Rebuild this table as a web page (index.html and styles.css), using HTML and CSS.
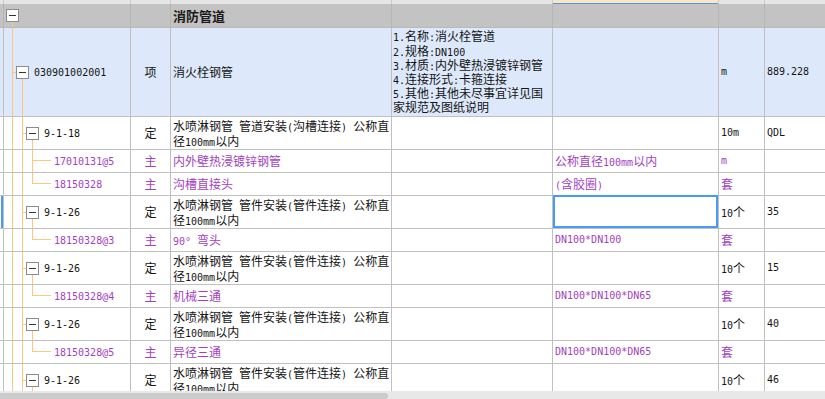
FILE: index.html
```html
<!DOCTYPE html>
<html lang="zh-CN">
<head>
<meta charset="utf-8">
<title>清单</title>
<link rel="stylesheet" href="styles.css">
</head>
<body>
<div class="grid">
  <div class="row hdr">
    <div class="cell c0"></div><div class="cell c1"></div><div class="cell c2"></div><div class="cell c3"></div><div class="cell c4"></div><div class="cell c5 colsel"></div><div class="cell c6"></div><div class="cell c7"></div>
  </div>
  <div class="row grp">
    <div class="cell c0"></div>
    <div class="cell c1"><span class="tg"></span></div>
    <div class="cell c2"></div>
    <div class="cell c3"><b class="gt">消防管道</b></div>
    <div class="cell c4"></div><div class="cell c5"></div><div class="cell c6"></div><div class="cell c7"></div>
  </div>
  <div class="row itm">
    <div class="cell c0"></div>
    <div class="cell c1"><span class="tg"></span><span class="code">030901002001</span></div>
    <div class="cell c2"><span class="t">项</span></div>
    <div class="cell c3"><span class="t">消火栓钢管</span></div>
    <div class="cell c4"><div class="desc"><span class="a">1.</span>名称<span class="a">:</span>消火栓管道<br><span class="a">2.</span>规格<span class="a">:DN100</span><br><span class="a">3.</span>材质<span class="a">:</span>内外壁热浸镀锌钢管<br><span class="a">4.</span>连接形式<span class="a">:</span>卡箍连接<br><span class="a">5.</span>其他<span class="a">:</span>其他未尽事宜详见国<br>家规范及图纸说明</div></div>
    <div class="cell c5"></div>
    <div class="cell c6"><span class="a">m</span></div>
    <div class="cell c7"><span class="a">889.228</span></div>
  </div>
  <div class="row q">
    <div class="cell c0"></div>
    <div class="cell c1"><span class="tg"></span><span class="code">9-1-18</span></div>
    <div class="cell c2"><span class="t">定</span></div>
    <div class="cell c3"><div class="two">水喷淋钢管<span class="a"> </span>管道安装<span class="a">(</span>沟槽连接<span class="a">) </span>公称直<br>径<span class="a">100mm</span>以内</div></div>
    <div class="cell c4"></div><div class="cell c5"></div>
    <div class="cell c6"><span class="a">10m</span></div>
    <div class="cell c7"><span class="a">QDL</span></div>
  </div>
  <div class="row m pu">
    <div class="cell c0"></div>
    <div class="cell c1 more"><span class="code">17010131@5</span></div>
    <div class="cell c2"><span class="t">主</span></div>
    <div class="cell c3"><span class="t">内外壁热浸镀锌钢管</span></div>
    <div class="cell c4"></div>
    <div class="cell c5"><span class="t">公称直径<span class="a">100mm</span>以内</span></div>
    <div class="cell c6"><span class="a">m</span></div>
    <div class="cell c7"></div>
  </div>
  <div class="row m pu">
    <div class="cell c0"></div>
    <div class="cell c1"><span class="code">18150328</span></div>
    <div class="cell c2"><span class="t">主</span></div>
    <div class="cell c3"><span class="t">沟槽直接头</span></div>
    <div class="cell c4"></div>
    <div class="cell c5"><span class="t"><span class="a">(</span>含胶圈<span class="a">)</span></span></div>
    <div class="cell c6"><span class="t">套</span></div>
    <div class="cell c7"></div>
  </div>
  <div class="row q">
    <div class="cell c0 ind"></div>
    <div class="cell c1"><span class="tg"></span><span class="code">9-1-26</span></div>
    <div class="cell c2"><span class="t">定</span></div>
    <div class="cell c3"><div class="two">水喷淋钢管<span class="a"> </span>管件安装<span class="a">(</span>管件连接<span class="a">) </span>公称直<br>径<span class="a">100mm</span>以内</div></div>
    <div class="cell c4"></div>
    <div class="cell c5 cur"></div>
    <div class="cell c6"><span class="t"><span class="a">10</span>个</span></div>
    <div class="cell c7"><span class="a">35</span></div>
  </div>
  <div class="row m pu">
    <div class="cell c0"></div>
    <div class="cell c1"><span class="code">18150328@3</span></div>
    <div class="cell c2"><span class="t">主</span></div>
    <div class="cell c3"><span class="t"><span class="a">90° </span>弯头</span></div>
    <div class="cell c4"></div>
    <div class="cell c5"><span class="a">DN100*DN100</span></div>
    <div class="cell c6"><span class="t">套</span></div>
    <div class="cell c7"></div>
  </div>
  <div class="row q">
    <div class="cell c0"></div>
    <div class="cell c1"><span class="tg"></span><span class="code">9-1-26</span></div>
    <div class="cell c2"><span class="t">定</span></div>
    <div class="cell c3"><div class="two">水喷淋钢管<span class="a"> </span>管件安装<span class="a">(</span>管件连接<span class="a">) </span>公称直<br>径<span class="a">100mm</span>以内</div></div>
    <div class="cell c4"></div><div class="cell c5"></div>
    <div class="cell c6"><span class="t"><span class="a">10</span>个</span></div>
    <div class="cell c7"><span class="a">15</span></div>
  </div>
  <div class="row m pu">
    <div class="cell c0"></div>
    <div class="cell c1"><span class="code">18150328@4</span></div>
    <div class="cell c2"><span class="t">主</span></div>
    <div class="cell c3"><span class="t">机械三通</span></div>
    <div class="cell c4"></div>
    <div class="cell c5"><span class="a">DN100*DN100*DN65</span></div>
    <div class="cell c6"><span class="t">套</span></div>
    <div class="cell c7"></div>
  </div>
  <div class="row q">
    <div class="cell c0"></div>
    <div class="cell c1"><span class="tg"></span><span class="code">9-1-26</span></div>
    <div class="cell c2"><span class="t">定</span></div>
    <div class="cell c3"><div class="two">水喷淋钢管<span class="a"> </span>管件安装<span class="a">(</span>管件连接<span class="a">) </span>公称直<br>径<span class="a">100mm</span>以内</div></div>
    <div class="cell c4"></div><div class="cell c5"></div>
    <div class="cell c6"><span class="t"><span class="a">10</span>个</span></div>
    <div class="cell c7"><span class="a">40</span></div>
  </div>
  <div class="row m pu">
    <div class="cell c0"></div>
    <div class="cell c1"><span class="code">18150328@5</span></div>
    <div class="cell c2"><span class="t">主</span></div>
    <div class="cell c3"><span class="t">异径三通</span></div>
    <div class="cell c4"></div>
    <div class="cell c5"><span class="a">DN100*DN100*DN65</span></div>
    <div class="cell c6"><span class="t">套</span></div>
    <div class="cell c7"></div>
  </div>
  <div class="row q">
    <div class="cell c0"></div>
    <div class="cell c1"><span class="tg"></span><span class="code">9-1-26</span></div>
    <div class="cell c2"><span class="t">定</span></div>
    <div class="cell c3"><div class="two">水喷淋钢管<span class="a"> </span>管件安装<span class="a">(</span>管件连接<span class="a">) </span>公称直<br>径<span class="a">100mm</span>以内</div></div>
    <div class="cell c4"></div><div class="cell c5"></div>
    <div class="cell c6"><span class="t"><span class="a">10</span>个</span></div>
    <div class="cell c7"><span class="a">46</span></div>
  </div>
</div>
<div class="hscroll"><div class="thumb"></div></div>
</body>
</html>
```

FILE: styles.css
```css
:root {
  --line: #c0c0c0;
  --tree: #fcc87e;
  --pu: #a23fc2;
  --sel: #4a9af5;
}
html, body {
  margin: 0;
  background: #ffffff;
}
body {
  font-family: "Noto Sans CJK SC", sans-serif;
  font-size: 12px;
  color: #141414;
}
.grid {
  height: 391px;
  overflow: hidden;
}
.row {
  display: flex;
  border-bottom: 1px solid var(--line);
}
.cell {
  box-sizing: border-box;
  border-right: 1px solid var(--line);
  display: flex;
  align-items: center;
  white-space: nowrap;
  overflow: hidden;
  flex: none;
}
.c0 { width: 4px; }
.c1 { width: 127px; }
.c2 { width: 40px; justify-content: center; }
.c3 { width: 221px; padding-left: 2px; }
.c4 { width: 161px; padding-left: 1px; }
.c5 { width: 166px; padding-left: 2px; }
.c6 { width: 46px; padding-left: 2px; }
.c7 { flex: 1; border-right: none; padding-left: 2px; }

.t { line-height: 14px; }
.a {
  font-family: "DejaVu Sans Mono", monospace;
  font-size: 10px;
  line-height: 1;
}
.code {
  font-family: "DejaVu Sans Mono", monospace;
  font-size: 10px;
  margin-left: 5px;
}
.m .code { margin-left: 0; }

/* header strip */
.hdr { height: 4px; border-bottom: none; background: #e6e6e6; }
.hdr .cell { border-right-color: #cacaca; }
.hdr .colsel { background: #fde6c0; box-shadow: inset 0 -1px 0 var(--sel); }

/* group row */
.grp { height: 23px; background: #c3c3c3; border-bottom-color: #b9b9b9; }
.grp .cell { border-right-color: #b6b6b6; }
.gt { font-size: 13px; font-weight: bold; color: #1a1a1a; }

/* bill item row */
.itm { height: 88px; background: #dde9fb; }
.desc { line-height: 14.2px; }
.two { line-height: 15px; }

.q { height: 32px; }
.m { height: 22px; }
.pu { color: var(--pu); }

/* tree toggle box */
.tg {
  width: 13px;
  height: 13px;
  box-sizing: border-box;
  border: 1px solid #8c8c8c;
  background: linear-gradient(#333, #333) center / 7px 1px no-repeat, #ffffff;
  flex: none;
}

/* tree guide lines */
.grp .c1 {
  padding-left: 2px;
  background: linear-gradient(var(--tree), var(--tree)) 8px 100% / 1px 50% no-repeat;
}
.itm .c1 {
  padding-left: 12px;
  background:
    linear-gradient(var(--tree), var(--tree)) 8px 0 / 1px 100% no-repeat,
    linear-gradient(var(--tree), var(--tree)) 8px 50% / 5px 1px no-repeat,
    linear-gradient(var(--tree), var(--tree)) 18px 100% / 1px 50% no-repeat;
}
.q .c1 {
  padding-left: 22px;
  background:
    linear-gradient(var(--tree), var(--tree)) 8px 0 / 1px 100% no-repeat,
    linear-gradient(var(--tree), var(--tree)) 18px 0 / 1px 100% no-repeat,
    linear-gradient(var(--tree), var(--tree)) 18px 50% / 5px 1px no-repeat,
    linear-gradient(var(--tree), var(--tree)) 28px 100% / 1px 50% no-repeat;
}
.m .c1 {
  padding-left: 50px;
  background:
    linear-gradient(var(--tree), var(--tree)) 8px 0 / 1px 100% no-repeat,
    linear-gradient(var(--tree), var(--tree)) 18px 0 / 1px 100% no-repeat,
    linear-gradient(var(--tree), var(--tree)) 28px 0 / 1px 11px no-repeat,
    linear-gradient(var(--tree), var(--tree)) 28px 10px / 19px 1px no-repeat;
}
.m .c1.more {
  background:
    linear-gradient(var(--tree), var(--tree)) 8px 0 / 1px 100% no-repeat,
    linear-gradient(var(--tree), var(--tree)) 18px 0 / 1px 100% no-repeat,
    linear-gradient(var(--tree), var(--tree)) 28px 0 / 1px 100% no-repeat,
    linear-gradient(var(--tree), var(--tree)) 28px 10px / 19px 1px no-repeat;
}

/* current row indicator and selected cell */
.ind {
  background: linear-gradient(var(--sel), var(--sel)) 1px 0 / 2px 100% no-repeat;
}
.cur {
  position: relative;
  overflow: visible;
}
.cur::after {
  content: "";
  position: absolute;
  left: 0;
  right: 0;
  top: -1px;
  bottom: 0;
  border: 2px solid var(--sel);
}

/* horizontal scrollbar */
.hscroll {
  height: 8px;
  box-sizing: border-box;
  padding-top: 2px;
  background: #e8e8e8;
}
.thumb {
  width: 388px;
  height: 6px;
  background: #cbcbcb;
  border-radius: 0 3px 3px 0;
}
```
